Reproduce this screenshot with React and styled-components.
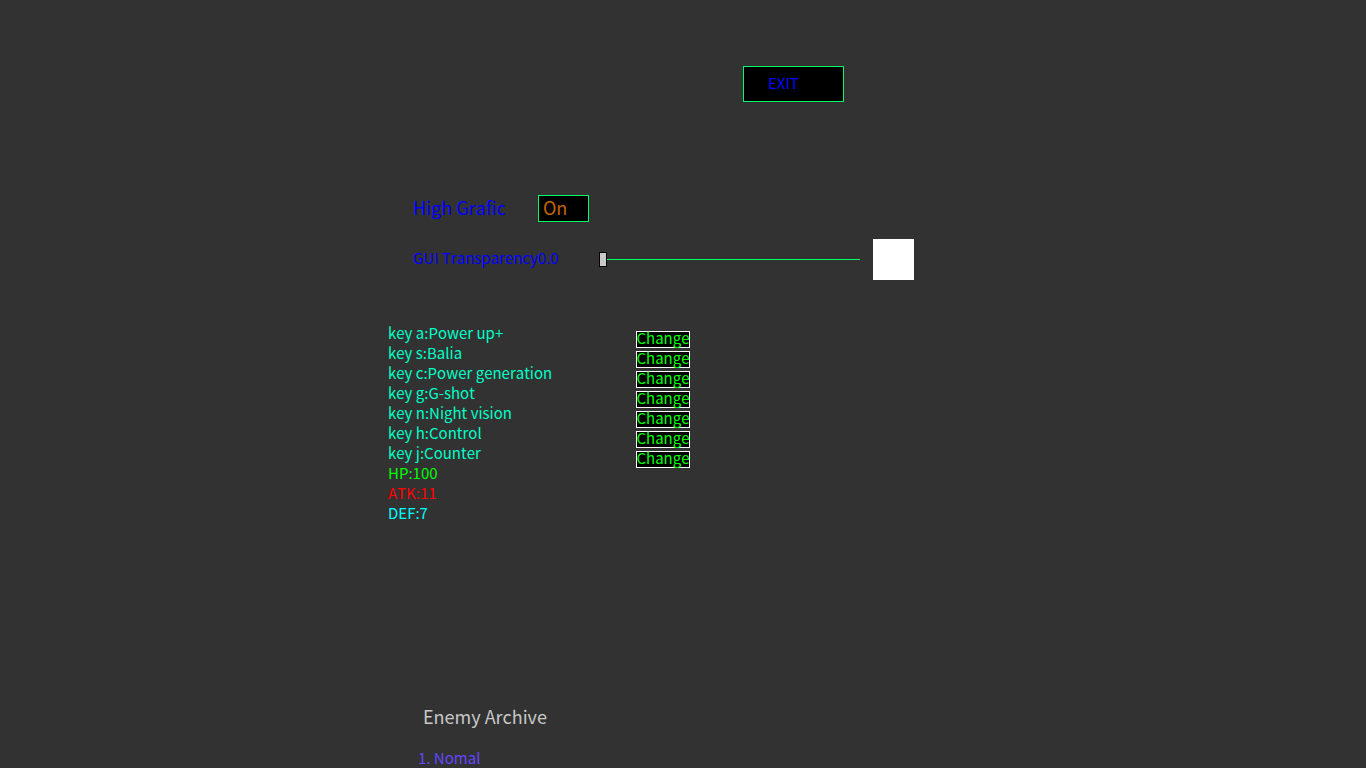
import React, { useState } from 'react';
import styled, { createGlobalStyle } from 'styled-components';

const GlobalStyle = createGlobalStyle`
  * { box-sizing: border-box; }
  body {
    margin: 0;
    background: #323232;
    color: #0000ff;
    font-family: "Noto Sans CJK JP", "Noto Sans", sans-serif;
    font-size: 15px;
    font-kerning: none;
    line-height: 20px;
    overflow: hidden;
  }
  button, input { font: inherit; font-kerning: none; margin: 0; border-radius: 0; }
`;

const Screen = styled.main`
  max-width: 590px;
  margin: 0 auto;
  padding-top: 66px;
`;

const TopBar = styled.header`
  display: flex;
  padding-left: 355px;
`;

const ExitButton = styled.button`
  width: 101px;
  height: 36px;
  padding: 0 0 2px 24px;
  text-align: left;
  color: #0000ff;
  background: #000;
  border: 1px solid #00ff64;
`;

const Settings = styled.section`
  padding: 93px 0 0 25px;
`;

const SettingRow = styled.div`
  display: flex;
  align-items: center;
  margin-bottom: ${(p) => p.$after}px;
`;

const SettingLabel = styled.label`
  width: ${(p) => p.$width}px;
  padding-bottom: 4px;
  font-size: ${(p) => (p.$large ? 18 : 15)}px;
  white-space: nowrap;
`;

const ToggleButton = styled.button`
  width: 51px;
  height: 27px;
  padding: 0 0 4px 4px;
  text-align: left;
  font-size: 18px;
  line-height: 20px;
  color: #c86400;
  background: #000;
  border: 1px solid #00ff64;
`;

const Slider = styled.input`
  appearance: none;
  width: 261px;
  height: 15px;
  margin-right: 13px;
  background: linear-gradient(#00ff64, #00ff64) center / 100% 1px no-repeat;

  &::-webkit-slider-thumb {
    appearance: none;
    width: 8px;
    height: 15px;
    background: #c8c8c8;
    border: 1px solid #000;
  }
`;

const Swatch = styled.div`
  width: 41px;
  height: 41px;
  background: rgba(255, 255, 255, ${(p) => p.$alpha});
`;

const Status = styled.section`
  display: flex;
  align-items: flex-start;
`;

const List = styled.ul`
  width: 248px;
  margin: 0;
  padding: 0;
  list-style: none;
`;

const Line = styled.li`
  color: ${(p) => p.$color};
`;

const ChangeColumn = styled.div`
  display: flex;
  flex-direction: column;
  gap: 3px;
  padding-top: 8px;
`;

const ChangeButton = styled.button`
  width: 54px;
  height: 17px;
  padding: 0 0 4px;
  line-height: 13px;
  white-space: nowrap;
  color: #00ff00;
  background: #000;
  border: 0;
  box-shadow: inset 0 0 0 1px #fff;
`;

const Archive = styled.section`
  padding: 181px 0 0 30px;
`;

const ArchiveTitle = styled.h2`
  margin: 0 0 20px 5px;
  font-size: 18px;
  font-weight: 400;
  line-height: 24px;
  color: #c8c8c8;
`;

const KEYS = [
  ['a', 'Power up+'],
  ['s', 'Balia'],
  ['c', 'Power generation'],
  ['g', 'G-shot'],
  ['n', 'Night vision'],
  ['h', 'Control'],
  ['j', 'Counter'],
];

const STATS = [
  ['HP:100', '#00ff00'],
  ['ATK:11', '#ff0000'],
  ['DEF:7', '#00ffff'],
];

export default function App() {
  const [high, setHigh] = useState(true);
  const [alpha, setAlpha] = useState(0);

  return (
    <>
      <GlobalStyle />
      <Screen>
        <TopBar>
          <ExitButton type="button">EXIT</ExitButton>
        </TopBar>
        <Settings>
          <SettingRow $after={17}>
            <SettingLabel htmlFor="grafic" $width={125} $large>High Grafic</SettingLabel>
            <ToggleButton id="grafic" type="button" aria-pressed={high} onClick={() => setHigh(!high)}>
              {high ? 'On' : 'Off'}
            </ToggleButton>
          </SettingRow>
          <SettingRow $after={43}>
            <SettingLabel htmlFor="transparency" $width={186}>
              {`GUI Transparency${alpha.toFixed(1)}`}
            </SettingLabel>
            <Slider
              id="transparency"
              type="range"
              min="0"
              max="1"
              step="0.1"
              value={alpha}
              onChange={(e) => setAlpha(Number(e.target.value))}
            />
            <Swatch $alpha={1 - alpha} />
          </SettingRow>
        </Settings>
        <Status>
          <List>
            {KEYS.map(([key, name]) => (
              <Line key={key} $color="#00ffc8">{`key ${key}:${name}`}</Line>
            ))}
            {STATS.map(([text, color]) => (
              <Line key={text} $color={color}>{text}</Line>
            ))}
          </List>
          <ChangeColumn>
            {KEYS.map(([key, name]) => (
              <ChangeButton key={key} type="button" title={name}>Change</ChangeButton>
            ))}
          </ChangeColumn>
        </Status>
        <Archive>
          <ArchiveTitle>Enemy Archive</ArchiveTitle>
          <List as="ol">
            <Line $color="#6446ff">1. Nomal</Line>
          </List>
        </Archive>
      </Screen>
    </>
  );
}
